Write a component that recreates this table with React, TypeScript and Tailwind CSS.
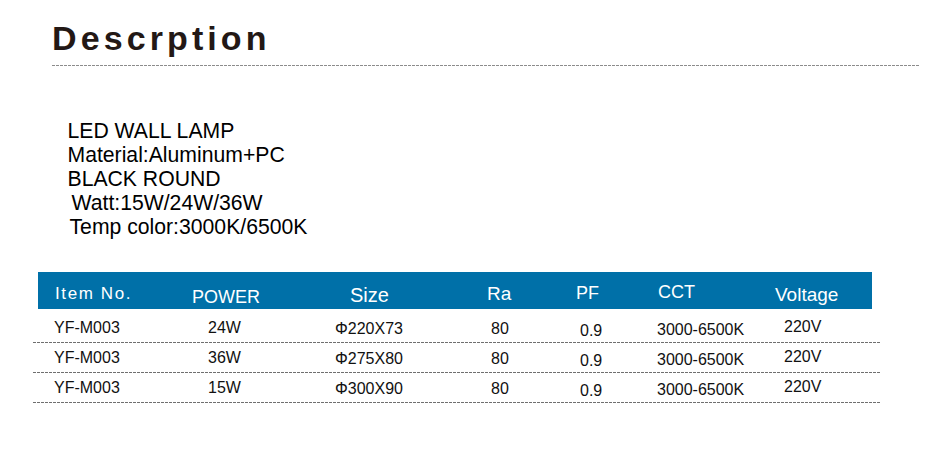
import React from "react";

type Row = {
  item: string;
  power: string;
  size: string;
  ra: string;
  pf: string;
  cct: string;
  voltage: string;
};

const rows: Row[] = [
  { item: "YF-M003", power: "24W", size: "Φ220X73", ra: "80", pf: "0.9", cct: "3000-6500K", voltage: "220V" },
  { item: "YF-M003", power: "36W", size: "Φ275X80", ra: "80", pf: "0.9", cct: "3000-6500K", voltage: "220V" },
  { item: "YF-M003", power: "15W", size: "Φ300X90", ra: "80", pf: "0.9", cct: "3000-6500K", voltage: "220V" },
];

const DashLine = ({ className }: { className: string }) => (
  <div
    className={`h-px bg-[repeating-linear-gradient(to_right,#6f6f6f_0px,#6f6f6f_3px,transparent_3px,transparent_4px)] ${className}`}
  />
);

const App: React.FC = () => {
  return (
    <div className="w-[932px] h-[454px] bg-white overflow-hidden font-['Liberation_Sans',Arial,sans-serif]">
      {/* Title */}
      <div className="pl-[52px] pt-[21px]">
        <h1 className="text-[34px] leading-[34px] font-bold tracking-[4.1px] text-[#231815]">
          Descrption
        </h1>
        <div className="mt-[10px] w-[867px] h-px bg-[repeating-linear-gradient(to_right,#8c8c8c_0px,#8c8c8c_3px,transparent_3px,transparent_4px)]" />
      </div>

      {/* Description */}
      <div className="ml-[67.5px] mt-[53px] text-[21.2px] leading-[24px] text-black">
        <p>LED WALL LAMP</p>
        <p>Material:Aluminum+PC</p>
        <p>BLACK ROUND</p>
        <p className="ml-[4px]">Watt:15W/24W/36W</p>
        <p className="ml-[2px]">Temp color:3000K/6500K</p>
      </div>

      {/* Table */}
      <div className="ml-[33px] mt-[33px] w-[847px]">
        <div className="ml-[5px] w-[834px] h-[37px] bg-[#0070a8] flex items-start text-white">
          <div className="w-[147px] pl-[17px] pt-[13px] text-[17px] leading-[17px] tracking-[1.6px]">Item No.</div>
          <div className="w-[135px] pl-[7px] pt-[16px] text-[18px] leading-[18px]">POWER</div>
          <div className="w-[150px] pl-[30px] pt-[13px] text-[20px] leading-[20px]">Size</div>
          <div className="w-[90px] pl-[17px] pt-[12px] text-[19px] leading-[19px]">Ra</div>
          <div className="w-[80px] pl-[16px] pt-[12px] text-[18px] leading-[18px]">PF</div>
          <div className="w-[125px] pl-[18px] pt-[11px] text-[18px] leading-[18px]">CCT</div>
          <div className="w-[107px] pl-[10px] pt-[13px] text-[19px] leading-[19px]">Voltage</div>
        </div>

        {rows.map((r, i) => (
          <div key={i}>
            <div
              className={`flex items-center text-[16px] leading-[16px] text-[#111] ${
                i === 0 ? "h-[33px] pt-[4px]" : "h-[29px]"
              }`}
            >
              <div className="w-[152px] pl-[21px]">{r.item}</div>
              <div className="w-[135px] pl-[23px]">{r.power}</div>
              <div className="w-[150px] pl-[15px] translate-y-[1px]">{r.size}</div>
              <div className="w-[90px] pl-[21px] translate-y-[1px]">{r.ra}</div>
              <div className="w-[80px] pl-[20px] translate-y-[3px]">{r.pf}</div>
              <div className="w-[125px] pl-[17px] translate-y-[1.5px]">{r.cct}</div>
              <div className="w-[115px] pl-[19px] -translate-y-[1px]">{r.voltage}</div>
            </div>
            <DashLine className="w-[847px]" />
          </div>
        ))}
      </div>
    </div>
  );
};

export default App;
